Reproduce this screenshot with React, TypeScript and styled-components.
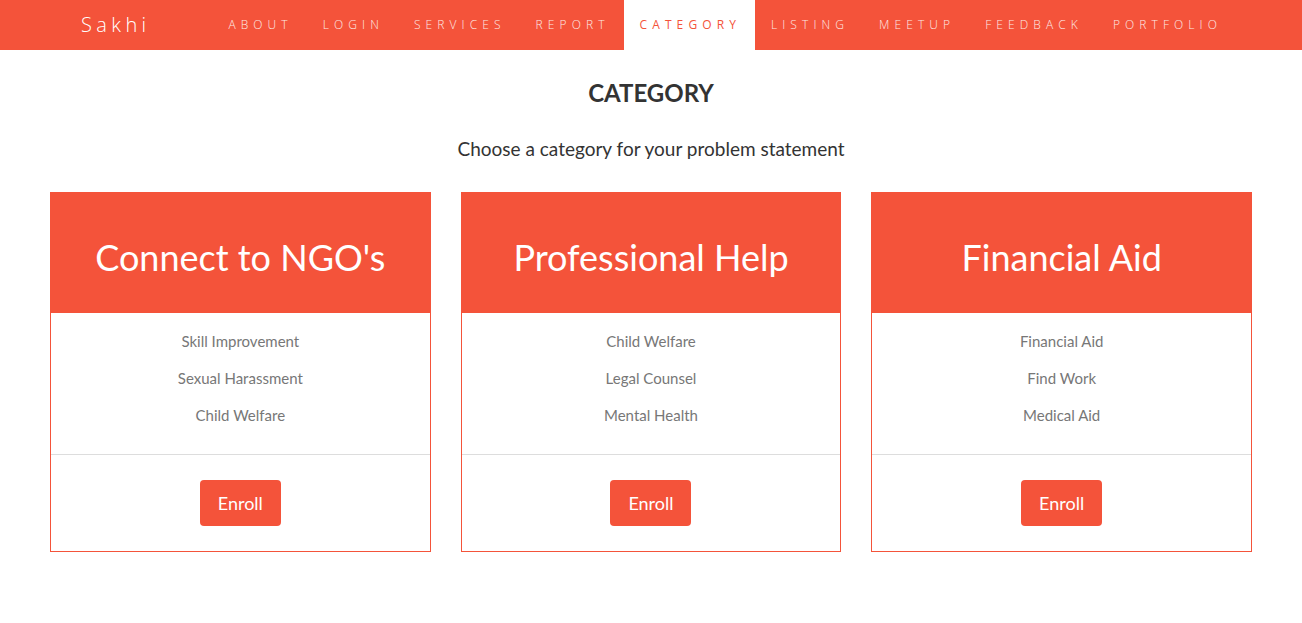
import React from "react";
import styled, { createGlobalStyle } from "styled-components";

const ORANGE = "#f4533a";

const Global = createGlobalStyle`
  html, body { margin: 0; padding: 0; background: #fff; }
  body { font-family: Lato, "Open Sans", sans-serif; color: #333; }
  * { box-sizing: border-box; }
`;

const NavBar = styled.nav`
  height: 50px;
  background: ${ORANGE};
`;

const NavInner = styled.div`
  width: 1170px;
  margin: 0 auto;
  height: 100%;
  display: flex;
  align-items: stretch;
  justify-content: space-between;
`;

const Brand = styled.a`
  display: flex;
  align-items: center;
  padding: 0 15px 2px;
  font-family: "Open Sans", sans-serif;
  font-weight: 300;
  font-size: 20px;
  letter-spacing: 4.4px;
  color: #fff;
  text-decoration: none;
`;

const Menu = styled.ul`
  list-style: none;
  margin: 0;
  padding: 0;
  display: flex;
  align-items: stretch;
`;

const MenuItem = styled.li<{ $active?: boolean }>`
  display: flex;
  align-items: center;
  padding: 0 14px 1px 16px;
  background: ${(p) => (p.$active ? "#fff" : "transparent")};
  color: ${(p) => (p.$active ? ORANGE : "#fde9e5")};
  font-family: "Open Sans", sans-serif;
  font-weight: ${(p) => (p.$active ? 400 : 300)};
  font-size: 12px;
  letter-spacing: 5.1px;
`;

const Main = styled.main`
  display: flex;
  flex-direction: column;
  align-items: center;
`;

const Title = styled.h2`
  margin: 30px 0 0;
  font-size: 24px;
  font-weight: 700;
  color: #333;
  line-height: 26px;
`;

const Subtitle = styled.p`
  margin: 31px 0 0;
  font-size: 19px;
  color: #333;
  line-height: 24px;
`;

const Grid = styled.div`
  margin-top: 31px;
  width: 1202px;
  display: grid;
  grid-template-columns: repeat(3, 1fr);
  column-gap: 30px;
`;

const Card = styled.div`
  border: 1px solid ${ORANGE};
  display: flex;
  flex-direction: column;
`;

const CardHead = styled.div`
  height: 120px;
  padding-top: 8px;
  background: ${ORANGE};
  color: #fff;
  display: flex;
  align-items: center;
  justify-content: center;
  font-size: 36px;
  font-weight: 400;
`;

const ItemList = styled.ul`
  list-style: none;
  margin: 0;
  padding: 10px 0 20px;
  border-bottom: 1px solid #ddd;
  display: flex;
  flex-direction: column;
  align-items: center;
`;

const Item = styled.li`
  font-size: 15px;
  line-height: 37px;
  color: #777;
`;

const CardFoot = styled.div`
  height: 96px;
  display: flex;
  align-items: center;
  justify-content: center;
`;

const Button = styled.button`
  width: 81px;
  height: 46px;
  border: none;
  border-radius: 4px;
  background: ${ORANGE};
  color: #fff;
  font-family: Lato, sans-serif;
  font-size: 18px;
  cursor: pointer;
`;

const navItems = ["ABOUT", "LOGIN", "SERVICES", "REPORT", "CATEGORY", "LISTING", "MEETUP", "FEEDBACK", "PORTFOLIO"];

const cards = [
  { title: "Connect to NGO's", items: ["Skill Improvement", "Sexual Harassment", "Child Welfare"] },
  { title: "Professional Help", items: ["Child Welfare", "Legal Counsel", "Mental Health"] },
  { title: "Financial Aid", items: ["Financial Aid", "Find Work", "Medical Aid"] },
];

export default function App() {
  return (
    <>
      <Global />
      <NavBar>
        <NavInner>
          <Brand href="#">Sakhi</Brand>
          <Menu>
            {navItems.map((n) => (
              <MenuItem key={n} $active={n === "CATEGORY"}>{n}</MenuItem>
            ))}
          </Menu>
        </NavInner>
      </NavBar>
      <Main>
        <Title>CATEGORY</Title>
        <Subtitle>Choose a category for your problem statement</Subtitle>
        <Grid>
          {cards.map((c) => (
            <Card key={c.title}>
              <CardHead>{c.title}</CardHead>
              <ItemList>
                {c.items.map((i) => (
                  <Item key={i}>{i}</Item>
                ))}
              </ItemList>
              <CardFoot>
                <Button>Enroll</Button>
              </CardFoot>
            </Card>
          ))}
        </Grid>
      </Main>
    </>
  );
}
